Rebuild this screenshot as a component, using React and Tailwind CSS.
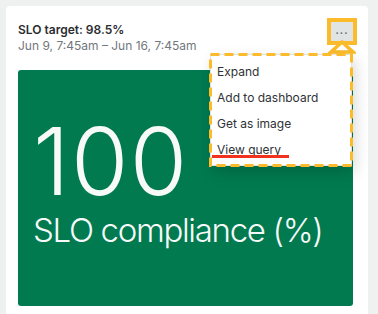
import React from "react";

const MenuItem = ({ label }) => (
  <div className="h-[26px] flex items-center px-[4px] text-[12px] text-[#2f3236]">{label}</div>
);

export default function App() {
  return (
    <div
      className="w-[378px] h-[314px] bg-[#eff0f0] pt-[6px] pl-[6px] overflow-hidden"
      style={{ fontFamily: "Inter, 'Liberation Sans', sans-serif" }}
    >
      <div className="relative w-[362px] h-[330px] bg-white rounded-[4px] pl-[12px] pr-[15px] pt-[12px]">
        {/* header */}
        <div className="flex justify-between items-start">
          <div className="pt-[4px]">
            <div className="text-[12px] font-semibold text-[#2b2d30] leading-[16px]">SLO target: 98.5%</div>
            <div className="text-[12px] text-[#72777c] leading-[16px]">Jun 9, 7:45am – Jun 16, 7:45am</div>
          </div>
          <div className="relative mr-[-4px]">
            <div className="w-[30px] h-[27px] border-[4px] border-[#fbbb2a] bg-[#e1e4e4] flex items-center justify-center text-[#6b6f73] text-[10px] font-bold leading-none pb-[3px] tracking-[1px]">...</div>
            <svg className="absolute left-[1px] top-[21px]" width="28" height="16" viewBox="0 0 28 16">
              <path d="M3 13 L14 3 L25 13 Z" fill="white" stroke="#fbbb2a" strokeWidth="3.5" strokeLinejoin="miter" />
            </svg>
          </div>
        </div>

        {/* big stat */}
        <div className="mt-[16px] w-[335px] h-[236px] bg-[#017a50] rounded-[3px] pl-[15px] pt-[45px] text-[#f7faf9]">
          <div className="text-[93px] font-light leading-[93px] tracking-[0.015em]">100</div>
          <div className="text-[33px] font-light leading-[40px] mt-[2px] tracking-[-0.04em]">SLO compliance (%)</div>
        </div>

        {/* dropdown */}
        <div className="absolute left-[203px] top-[47px] w-[144px] h-[114px]">
          <div className="absolute left-[1px] top-[1px] right-[1px] bottom-[1px] bg-white border border-[#dfe1e3] shadow-[3px_6px_14px_rgba(0,0,0,0.16)] pt-[4px] px-[2px]">
            <MenuItem label="Expand" />
            <MenuItem label="Add to dashboard" />
            <MenuItem label="Get as image" />
            <MenuItem label="View query" />
          </div>
          <svg className="absolute left-0 top-0" width="144" height="114" viewBox="0 0 144 114">
            <rect x="1.5" y="1.5" width="141" height="111" fill="none" stroke="#fbbb2a" strokeWidth="3" strokeDasharray="9 5" />
          </svg>
          <div className="absolute left-[3px] top-[102px] w-[77px] h-[3px] bg-[#f0321f]"></div>
        </div>
      </div>
    </div>
  );
}
